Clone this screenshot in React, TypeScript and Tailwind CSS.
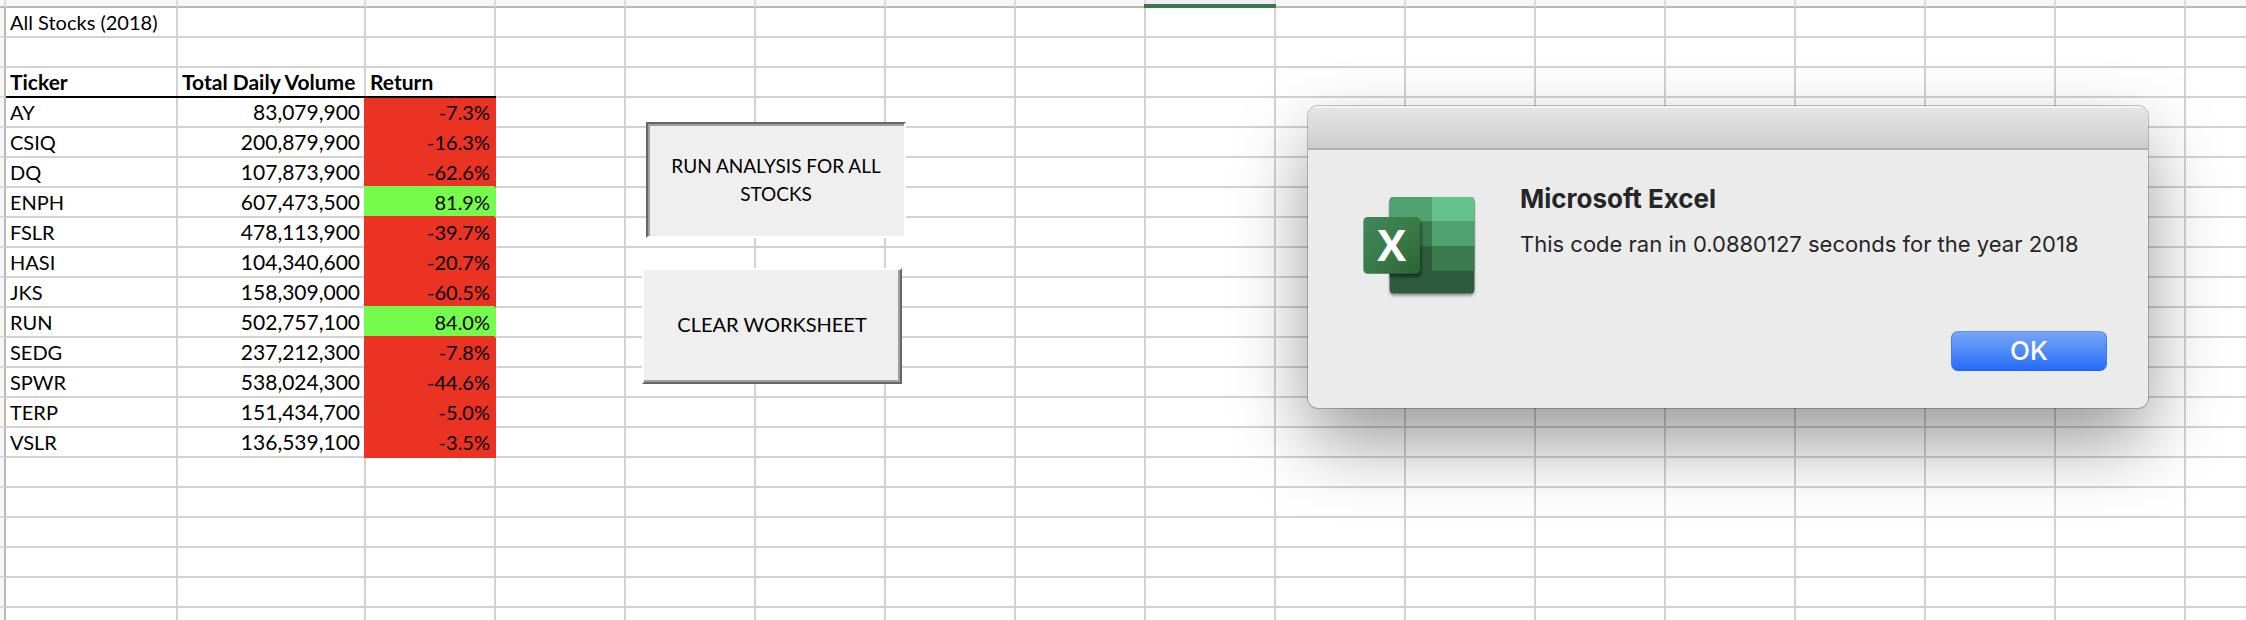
import React from "react";

type Tone = "down" | "up";

interface Stock {
  ticker: string;
  volume: string;
  change: string;
  tone: Tone;
}

const stocks: Stock[] = [
  { ticker: "AY", volume: "83,079,900", change: "-7.3%", tone: "down" },
  { ticker: "CSIQ", volume: "200,879,900", change: "-16.3%", tone: "down" },
  { ticker: "DQ", volume: "107,873,900", change: "-62.6%", tone: "down" },
  { ticker: "ENPH", volume: "607,473,500", change: "81.9%", tone: "up" },
  { ticker: "FSLR", volume: "478,113,900", change: "-39.7%", tone: "down" },
  { ticker: "HASI", volume: "104,340,600", change: "-20.7%", tone: "down" },
  { ticker: "JKS", volume: "158,309,000", change: "-60.5%", tone: "down" },
  { ticker: "RUN", volume: "502,757,100", change: "84.0%", tone: "up" },
  { ticker: "SEDG", volume: "237,212,300", change: "-7.8%", tone: "down" },
  { ticker: "SPWR", volume: "538,024,300", change: "-44.6%", tone: "down" },
  { ticker: "TERP", volume: "151,434,700", change: "-5.0%", tone: "down" },
  { ticker: "VSLR", volume: "136,539,100", change: "-3.5%", tone: "down" },
];

const fill: Record<Tone, string> = {
  down: "bg-[#ea3323] border-r-[#ea3323]",
  up: "bg-[#75fb4c] border-r-[#75fb4c]",
};
const bottomEdge: Record<Tone, string> = { down: "border-b-[#ea3323]", up: "border-b-[#75fb4c]" };
// The fill also covers the grid lines above and to the left of the cell.
const firstSpill = "shadow-[-2px_0_0_#ea3323]";
const spill: Record<Tone, string> = {
  down: "shadow-[-2px_-2px_0_#ea3323,-2px_0_0_#ea3323]",
  up: "shadow-[-2px_-2px_0_#75fb4c,-2px_0_0_#75fb4c]",
};

const EXTRA_COLUMNS = 14;
const SELECTED_COLUMN = 5;
const cell = "h-[30px] border-r-2 border-b-2 p-0 whitespace-nowrap";
const line = "border-[#d2d2d2]";

function range(n: number): number[] {
  return Array.from({ length: n }, (_, i) => i);
}

function Gutter() {
  return <td className={`${cell} border-r-[#b8b8b8] border-b-[#dcdcdc] bg-[#f7f7f7]`} />;
}

function Blank({ count }: { count: number }) {
  return (
    <>
      {range(count).map((i) => (
        <td key={i} className={`${cell} ${line}`} />
      ))}
    </>
  );
}

function BlankRow() {
  return (
    <tr>
      <Gutter />
      <Blank count={3 + EXTRA_COLUMNS} />
    </tr>
  );
}

function Heading({ children }: { children: string }) {
  return (
    <th scope="col" className={`${cell} ${line} relative pl-1 text-left text-[21px] font-bold`}>
      {children}
      <span className="absolute -right-0.5 -bottom-0.5 left-0 h-0.5 bg-black" />
    </th>
  );
}

function Sheet() {
  return (
    <table className="w-max table-fixed border-separate border-spacing-0 text-xl leading-7">
      <colgroup>
        <col className="w-[6px]" />
        <col className="w-[172px]" />
        <col className="w-[188px]" />
        <col className="w-[130px]" />
        {range(EXTRA_COLUMNS).map((i) => (
          <col key={i} className="w-[130px]" />
        ))}
      </colgroup>
      <thead>
        <tr>
          {range(4 + EXTRA_COLUMNS).map((i) => {
            const selected = i === 4 + SELECTED_COLUMN;
            return (
              <td
                key={i}
                className={`relative h-2 border-r-2 border-b-2 border-r-[#dcdcdc] border-b-[#b8b8b8] p-0 ${
                  selected ? "bg-[#eeeeee]" : "bg-[#f7f7f7]"
                }`}
              >
                {selected && <span className="absolute -right-0.5 -bottom-0.5 -left-0.5 h-1 bg-[#3c754c]" />}
              </td>
            );
          })}
        </tr>
      </thead>
      <tbody>
        <tr>
          <Gutter />
          <td className={`${cell} ${line} pl-1`}>All Stocks (2018)</td>
          <Blank count={2 + EXTRA_COLUMNS} />
        </tr>
        <BlankRow />
        <tr>
          <Gutter />
          <Heading>Ticker</Heading>
          <Heading>Total Daily Volume</Heading>
          <Heading>Return</Heading>
          <Blank count={EXTRA_COLUMNS} />
        </tr>
        {stocks.map((s, i) => {
          const next = stocks[i + 1] ?? s;
          return (
            <tr key={s.ticker}>
              <Gutter />
              <td className={`${cell} ${line} pl-1`}>{s.ticker}</td>
              <td className={`${cell} ${line} pr-1 text-right text-[21px]`}>{s.volume}</td>
              <td
                className={`${cell} ${fill[s.tone]} ${bottomEdge[next.tone]} ${
                  i === 0 ? firstSpill : spill[s.tone]
                } pr-1 text-right`}
              >
                {s.change}
              </td>
              <Blank count={EXTRA_COLUMNS} />
            </tr>
          );
        })}
        {range(6).map((i) => (
          <BlankRow key={i} />
        ))}
      </tbody>
    </table>
  );
}

function ExcelLogo() {
  return (
    <svg viewBox="60 70 360 330" className="h-[110px] w-[120px] shrink-0" aria-hidden="true">
      <defs>
        <linearGradient id="tile" x1="0" y1="0" x2="1" y2="1">
          <stop offset="0" stopColor="#41865a" />
          <stop offset="0.5" stopColor="#397c49" />
          <stop offset="1" stopColor="#2b6432" />
        </linearGradient>
        <clipPath id="book">
          <rect x="148" y="82" width="256" height="290" rx="13" />
        </clipPath>
        <filter id="soft" x="-20%" y="-20%" width="140%" height="140%">
          <feGaussianBlur stdDeviation="5" />
        </filter>
      </defs>
      <rect x="149" y="90" width="254" height="289" rx="13" fill="#000" opacity="0.35" filter="url(#soft)" />
      <g clipPath="url(#book)">
        <rect x="148" y="82" width="256" height="290" fill="#2d5b3b" />
        <rect x="148" y="82" width="128" height="74" fill="#4fa26d" />
        <rect x="276" y="82" width="128" height="74" fill="#64c388" />
        <rect x="148" y="156" width="128" height="74" fill="#397b4a" />
        <rect x="276" y="156" width="128" height="74" fill="#4fa26d" />
        <rect x="276" y="230" width="128" height="73" fill="#397b4a" />
        <rect x="74" y="150" width="170" height="172" rx="13" fill="#000" opacity="0.45" filter="url(#soft)" />
      </g>
      <rect x="70" y="142" width="170" height="170" rx="13" fill="url(#tile)" />
      <text x="155" y="273" textAnchor="middle" fontSize="130" fontWeight="700" fill="#fff" className="font-['Open_Sans',sans-serif]">
        X
      </text>
    </svg>
  );
}

function AlertDialog() {
  return (
    <section
      role="dialog"
      aria-labelledby="alert-title"
      aria-describedby="alert-text"
      className="absolute top-[106px] left-[1308px] w-[840px] overflow-hidden rounded-[10px] bg-[#ebebeb] font-['Inter',sans-serif] text-[#262626] shadow-[0_0_0_1px_rgba(0,0,0,0.22),0_34px_74px_rgba(0,0,0,0.4)]"
    >
      <div className="h-11 border-t-2 border-b-2 border-t-[#f2f2f2] border-b-[#b0b0b0] bg-linear-to-b from-[#e5e5e5] to-[#cdcdcd]" />
      <div className="flex gap-10 pt-[43px] pl-[52px]">
        <ExcelLogo />
        <div className="-mt-2.5">
          <h1 id="alert-title" className="text-[26px] leading-8 font-bold">Microsoft Excel</h1>
          <p id="alert-text" className="mt-[15px] text-[22px] leading-7">This code ran in 0.0880127 seconds for the year 2018</p>
        </div>
      </div>
      <div className="flex justify-end pt-7 pr-[41px] pb-[37px]">
        <button
          type="button"
          className="h-10 w-[156px] rounded-[7px] border border-t-[#5f93e6] border-r-[#3f7df0] border-b-[#1f62f0] border-l-[#3f7df0] bg-linear-to-b from-[#77a6f7] to-[#266bf8] text-[26px] leading-8 font-medium text-white"
        >
          OK
        </button>
      </div>
    </section>
  );
}

export default function App() {
  return (
    <main className="relative h-screen overflow-hidden bg-white font-['Lato','Liberation_Sans',sans-serif] text-black">
      <Sheet />
      <button
        type="button"
        className="absolute top-[122px] left-[646px] h-[116px] w-[260px] border-2 border-t-[#666] border-r-white border-b-white border-l-[#666] bg-[#efefef] px-5 text-[19px] leading-7 shadow-[inset_2px_2px_0_#9f9f9f]"
      >
        RUN ANALYSIS FOR ALL STOCKS
      </button>
      <button
        type="button"
        className="absolute top-[268px] left-[642px] h-[116px] w-[260px] border-2 border-t-white border-r-[#666] border-b-[#666] border-l-white bg-[#efefef] px-5 pb-1 text-xl leading-7 shadow-[inset_-2px_-2px_0_#9f9f9f]"
      >
        CLEAR WORKSHEET
      </button>
      <AlertDialog />
    </main>
  );
}
